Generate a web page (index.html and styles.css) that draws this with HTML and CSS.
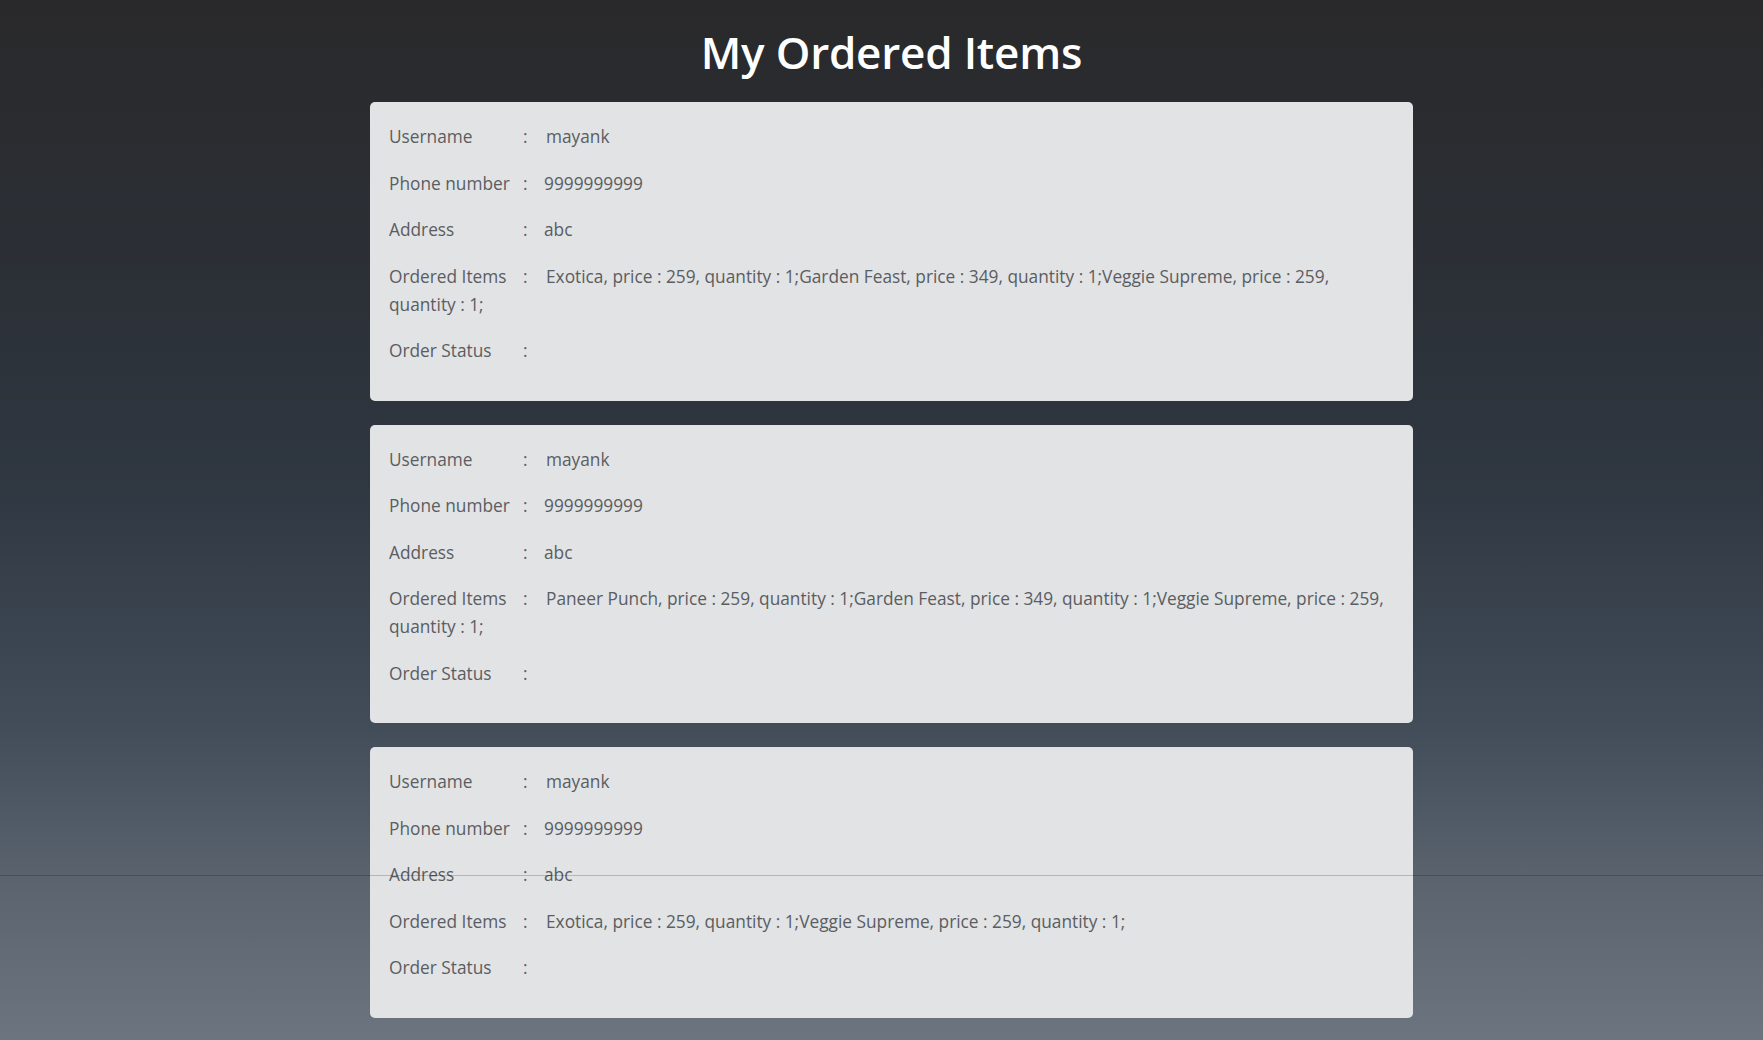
FILE: index.html
```html
<!DOCTYPE html>
<html lang="en">
<head>
<meta charset="utf-8">
<title>My Ordered Items</title>
<link rel="stylesheet" href="styles.css">
</head>
<body>
<div class="page">
  <h1 class="title">My Ordered Items</h1>
  <div class="list">
    <div class="card">
      <p class="row"><span class="label">Username</span><span class="colon">:</span><span class="value">mayank</span></p>
      <p class="row"><span class="label">Phone number</span><span class="colon">:</span><span class="value num">9999999999</span></p>
      <p class="row"><span class="label">Address</span><span class="colon">:</span><span class="value num">abc</span></p>
      <p class="row"><span class="label">Ordered Items</span><span class="colon">:</span><span class="value">Exotica, price : 259, quantity : 1;Garden Feast, price : 349, quantity : 1;Veggie Supreme, price : 259, quantity : 1;</span></p>
      <p class="row"><span class="label">Order Status</span><span class="colon">:</span><span class="value"></span></p>
    </div>
    <div class="card">
      <p class="row"><span class="label">Username</span><span class="colon">:</span><span class="value">mayank</span></p>
      <p class="row"><span class="label">Phone number</span><span class="colon">:</span><span class="value num">9999999999</span></p>
      <p class="row"><span class="label">Address</span><span class="colon">:</span><span class="value num">abc</span></p>
      <p class="row"><span class="label">Ordered Items</span><span class="colon">:</span><span class="value">Paneer Punch, price : 259, quantity : 1;Garden Feast, price : 349, quantity : 1;Veggie Supreme, price : 259, quantity : 1;</span></p>
      <p class="row"><span class="label">Order Status</span><span class="colon">:</span><span class="value"></span></p>
    </div>
    <div class="card">
      <p class="row"><span class="label">Username</span><span class="colon">:</span><span class="value">mayank</span></p>
      <p class="row"><span class="label">Phone number</span><span class="colon">:</span><span class="value num">9999999999</span></p>
      <p class="row"><span class="label">Address</span><span class="colon">:</span><span class="value num">abc</span></p>
      <p class="row"><span class="label">Ordered Items</span><span class="colon">:</span><span class="value">Exotica, price : 259, quantity : 1;Veggie Supreme, price : 259, quantity : 1;</span></p>
      <p class="row"><span class="label">Order Status</span><span class="colon">:</span><span class="value"></span></p>
    </div>
  </div>
  <div class="rule"></div>
</div>
</body>
</html>
```

FILE: styles.css
```css
html, body {
  margin: 0;
  padding: 0;
}
body {
  min-height: 1040px;
  background: linear-gradient(to bottom, #29292b 0px, #2b2f35 250px, #2f3741 480px, #414c58 720px, #5a636e 880px, #6c747f 1040px);
  font-family: "Open Sans", "Noto Sans", sans-serif;
  color: #5a5d61;
}
.page {
  position: relative;
  min-height: 1040px;
  padding-left: 20px;
  box-sizing: border-box;
  overflow: hidden;
}
.title {
  margin: 0;
  padding: 22px 0 0 0;
  height: 80px;
  box-sizing: border-box;
  text-align: center;
  color: #ffffff;
  font-size: 44px;
  font-weight: 600;
  line-height: 60px;
  letter-spacing: -0.2px;
}
.list {
  padding-top: 22px;
  display: flex;
  flex-direction: column;
  align-items: center;
  gap: 24px;
}
.card {
  width: 1043px;
  box-sizing: border-box;
  padding: 21px 19px 17px 19px;
  background: #e2e3e5;
  border-radius: 5px;
  font-size: 17.3px;
  line-height: 28px;
}
.row {
  margin: 0 0 18.5px 0;
}
.label {
  display: inline-block;
  width: 134px;
}
.colon {
  display: inline-block;
  width: 23px;
}
.value.num {
  margin-left: -2px;
}
.rule {
  position: absolute;
  left: 0;
  right: 0;
  top: 875px;
  height: 1px;
  background: rgba(0, 0, 0, 0.2);
}
```
